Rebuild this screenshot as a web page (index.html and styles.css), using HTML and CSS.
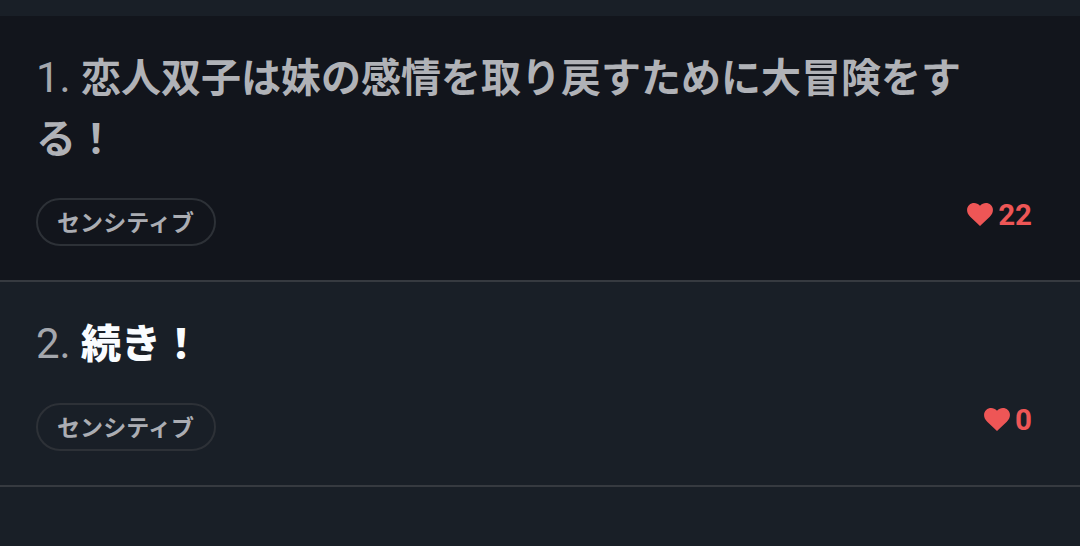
FILE: index.html
```html
<!DOCTYPE html>
<html lang="ja">
<head>
<meta charset="utf-8">
<title>エピソード</title>
<link rel="stylesheet" href="styles.css">
</head>
<body>
<main class="list">
  <article class="item item--read">
    <h2 class="title"><span class="num">1. </span>恋人双子は妹の感情を取り戻すために大冒険をする！</h2>
    <div class="meta">
      <span class="tag">センシティブ</span>
      <span class="likes"><svg class="heart" viewBox="0 0 26 23"><path d="M13 23L3.200 13.700C-.8 9.900-.8 4.800 2.200 2 5.200-.8 10-.6 13 2.800 16-.6 20.800-.8 23.800 2c3 2.800 3 7.900-1 11.700z"/></svg>22</span>
    </div>
  </article>
  <article class="item">
    <h2 class="title"><span class="num">2. </span>続き！</h2>
    <div class="meta">
      <span class="tag">センシティブ</span>
      <span class="likes"><svg class="heart" viewBox="0 0 26 23"><path d="M13 23L3.200 13.700C-.8 9.900-.8 4.800 2.200 2 5.200-.8 10-.6 13 2.800 16-.6 20.800-.8 23.800 2c3 2.800 3 7.900-1 11.700z"/></svg>0</span>
    </div>
  </article>
</main>
</body>
</html>
```
FILE: styles.css
```css
* { box-sizing: border-box; }
body {
  margin: 0;
  min-height: 546px;
  background: #191f27;
  font-family: Roboto, "Noto Sans CJK JP", sans-serif;
}
.list { padding-top: 16px; }
.item {
  padding: 32px 48px 34px 36px;
  border-bottom: 2px solid #363a40;
  color: #f9fcff;
}
.item--read {
  background: #12151c;
  color: #b0b2b7;
}
.title {
  margin: 0;
  font-size: 40px;
  line-height: 61px;
  font-weight: 900;
}
.item--read .title { font-weight: 700; }
.title .num {
  font-weight: 400;
  font-size: 42px;
  line-height: 1;
  color: #a4a7ad;
}
.meta {
  display: flex;
  justify-content: space-between;
  align-items: flex-start;
  margin-top: 28px;
}
.tag {
  height: 48px;
  width: 180px;
  padding-left: 19px;
  border: 2px solid #2d3137;
  border-radius: 24px;
  color: #abadb3;
  font-size: 23px;
  line-height: 48px;
  letter-spacing: 0.1px;
  font-weight: 700;
}
.likes {
  display: flex;
  align-items: center;
  gap: 5px;
  height: 34px;
  color: #ee5656;
  font-size: 29.5px;
  font-weight: 700;
}
.heart {
  width: 26px;
  height: 23px;
  margin-bottom: 2px;
  fill: currentColor;
}
```
